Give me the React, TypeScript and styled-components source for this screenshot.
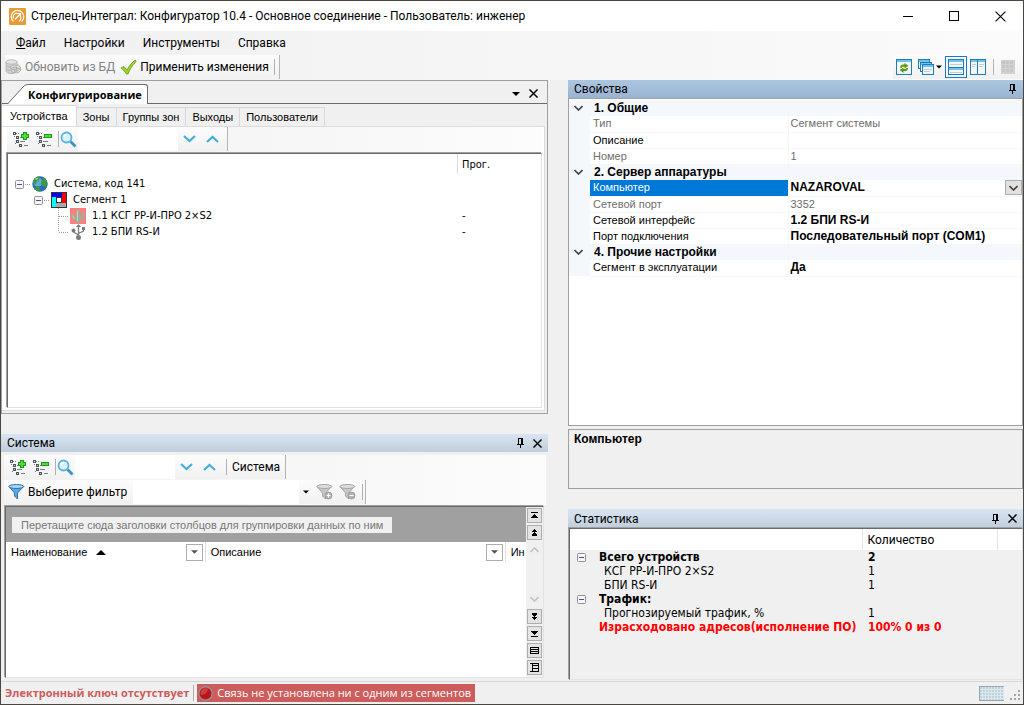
import React from "react";
import styled, { createGlobalStyle, css } from "styled-components";

const UI = `Roboto, "Open Sans", sans-serif`;
const UI_SMALL = `"Open Sans", "Noto Sans", sans-serif`;
const TAHOMA = `"DejaVu Sans Condensed", "DejaVu Sans", sans-serif`;
const SANS = `"Liberation Sans", Arial, sans-serif`;

const Global = createGlobalStyle`
  *, *::before, *::after { box-sizing: border-box; }
  body { margin: 0; background: #3a342e; }
  button, input, select { font: inherit; color: inherit; margin: 0; padding: 0; border: 0; background: none; border-radius: 0; }
  input, select { outline: none; appearance: none; min-width: 0; }
  svg { display: block; flex: none; }
  table { border-collapse: collapse; border-spacing: 0; }
`;

/* ---------- window ---------- */

const Window = styled.div`
  min-height: 100vh;
  display: flex;
  flex-direction: column;
  border: 1px solid #4a453f;
  background: #f0f0f0;
  color: #000;
  font: 12px/16px ${UI};
  white-space: nowrap;
`;

const TitleBar = styled.header`
  display: flex;
  align-items: center;
  height: 30px;
  padding-left: 8px;
  gap: 5px;
  background: #fff;
`;

const Title = styled.h1`
  flex: 1;
  min-width: 0;
  margin: 0;
  overflow: hidden;
  font: inherit;
`;

const WindowButton = styled.button`
  display: flex;
  align-items: center;
  justify-content: center;
  width: 46px;
  height: 30px;
  margin-left: -5px;
  &:first-of-type { margin-left: 0; }
`;

const MenuBar = styled.nav`
  display: flex;
  align-items: center;
  height: 24px;
  padding-left: 6px;
  background: linear-gradient(90deg, #f0f0f0, #fbfbfb);
`;

const MenuItem = styled.button`
  height: 24px;
  padding: 0 9px;
  &:first-child::first-letter { text-decoration: underline; }
`;

const ToolStripRow = styled.div`
  display: flex;
  justify-content: space-between;
  height: 25px;
  padding-left: 4px;
  background: linear-gradient(90deg, #f0f0f0, #fbfbfb);
`;

const ToolStrip = styled.div<{ $end?: boolean }>`
  display: flex;
  align-items: center;
  height: 24px;
  gap: 5px;
  background: linear-gradient(#fcfcfc, #f1f1f1);
  ${(p) => p.$end && css`padding-right: 4px; border-right: 1px solid #b4b4b4;`}
`;

const ToolButton = styled.button<{ $muted?: boolean }>`
  display: flex;
  align-items: center;
  gap: 3px;
  height: 22px;
  color: ${(p) => (p.$muted ? "#838383" : "#000")};
`;

const Rule = styled.span`
  flex: none;
  width: 1px;
  height: 16px;
  background: #b0b0b0;
`;

const LayoutTools = styled(ToolStrip)`
  gap: 0;
  padding-right: 5px;
  ${Rule} { margin: 0 4px; }
`;

const LayoutButton = styled.button<{ $active?: boolean }>`
  display: flex;
  align-items: center;
  gap: 2px;
  height: 22px;
  padding: 0 2px;
  border: 1px solid ${(p) => (p.$active ? "#1a7bd7" : "transparent")};
`;

/* ---------- workspace ---------- */

const Workspace = styled.main`
  flex: 1;
  display: grid;
  grid-template-columns: minmax(0, 547fr) minmax(0, 455fr);
  column-gap: 20px;
`;

const Column = styled.div`
  display: flex;
  flex-direction: column;
  min-width: 0;
`;

const Gap = styled.div<{ $size: number }>`
  flex: none;
  height: ${(p) => p.$size}px;
`;

const ConfigPanel = styled.section`
  flex: 332 1 0;
  display: flex;
  flex-direction: column;
  border: 1px solid #a0a0a0;
`;

const DockBar = styled.div`
  display: flex;
  align-items: flex-end;
  justify-content: space-between;
  height: 23px;
  border-bottom: 1px solid #6b6b6b;
`;

const DockTab = styled.div`
  display: flex;
  margin: 0 0 -1px 6px;
  height: 20px;
`;

const DockCaption = styled.h2`
  margin: 0;
  height: 20px;
  padding: 0 5px 0 0;
  border: solid #6b6b6b;
  border-width: 1px 1px 0 0;
  border-top-right-radius: 3px;
  background: #fff;
  font: bold 11px/19px ${UI_SMALL};
`;

const PanelButtons = styled.div`
  display: flex;
  align-items: center;
  gap: 9px;
  height: 19px;
  padding-right: 9px;
`;

const IconButton = styled.button`
  display: flex;
  align-items: center;
  justify-content: center;
`;

const Tabs = styled.div`
  display: flex;
  align-items: flex-end;
  height: 22px;
  font: 11px/16px ${SANS};
`;

const Tab = styled.button<{ $active?: boolean }>`
  height: ${(p) => (p.$active ? 21 : 19)}px;
  min-width: 40px;
  padding: 0 ${(p) => (p.$active ? 8 : 6)}px;
  border: solid #d9d9d9;
  border-width: 1px 1px 0 0;
  background: ${(p) => (p.$active ? "#fff" : "#f0f0f0")};
`;

const TabPage = styled.div`
  flex: 1;
  display: flex;
  flex-direction: column;
  gap: 1px;
  margin: 0 2px 2px 0;
  padding: 0 2px 2px 5px;
  border: solid #dcdcdc;
  border-width: 1px 1px 1px 0;
  background: #fff;
`;

const Sunken = styled.div`
  flex: 1;
  display: flex;
  flex-direction: column;
  border: 1px solid;
  border-color: #696969 #e3e3e3 #e3e3e3 #696969;
  box-shadow: -1px -1px 0 #a0a0a0;
  background: #fff;
`;

const StripLine = styled.div`
  display: flex;
  height: 25px;
  background: linear-gradient(90deg, #f1f1f1, #fcfcfc);
`;

const TreeTools = styled.div`
  display: flex;
  align-items: center;
  height: 24px;
  padding-left: 5px;
  background: linear-gradient(#fcfcfc, #f1f1f1);
  border-right: 1px solid #b4b4b4;
`;

const TreeToolButton = styled(IconButton)`
  width: 23px;
  height: 22px;
  justify-content: flex-start;
`;

const SearchButton = styled(IconButton)`
  width: 17px;
  height: 22px;
  margin: 0 1px;
`;

const SearchInput = styled.input`
  width: 100px;
  height: 24px;
  background: #fff;
`;

const Nav = styled.div<{ $wide?: boolean }>`
  display: flex;
  align-items: center;
  gap: 10px;
  padding: 0 ${(p) => (p.$wide ? 10 : 8)}px 0 5px;
`;

const TreeHeader = styled.div`
  display: flex;
  justify-content: flex-end;
  height: 20px;
  font: 11px/22px ${TAHOMA};
`;

const ProgColumn = styled.div`
  width: 84px;
  padding-left: 4px;
  border-left: 1px solid #dcdcdc;
`;

const Tree = styled.ul`
  margin: 2px 0 0;
  padding: 0;
  list-style: none;
  font: 11px/16px ${TAHOMA};
`;

const TreeRow = styled.li<{ $level: number }>`
  display: flex;
  align-items: center;
  height: 16px;
  padding-left: ${(p) => 7 + p.$level * 19}px;
`;

const TreeLabel = styled.span`
  flex: 1;
  padding-left: 6px;
`;

const ProgValue = styled.span`
  width: 79px;
`;

/* ---------- docked panels ---------- */

const PanelHeader = styled.div<{ $focused?: boolean; $tall?: boolean }>`
  display: flex;
  align-items: center;
  justify-content: space-between;
  flex: none;
  height: ${(p) => (p.$tall ? 19 : 18)}px;
  padding: 0 6px;
  background: ${(p) => (p.$focused ? "linear-gradient(#adc6e0, #98b4d2)" : "linear-gradient(#d9e5f2, #bfcddc)")};
  h2 { margin: 0; font: inherit; }
  div { display: flex; align-items: center; gap: 8px; }
`;

const SystemPanel = styled.section`
  flex: 244 1 0;
  display: flex;
  flex-direction: column;
`;

const SystemBody = styled.div`
  flex: 1;
  display: flex;
  flex-direction: column;
  margin-right: 2px;
  padding: 3px 0 0 3px;
`;

const GridFrame = styled(Sunken)`
  flex-direction: row;
  margin: 1px 2px 0 1px;
`;

const GridMain = styled.div`
  flex: 1;
  min-width: 0;
`;

const GroupBar = styled.div`
  display: flex;
  align-items: center;
  height: 35px;
  padding-left: 6px;
  background: #a0a0a0;
  font: 11px/16px ${SANS};
  span {
    height: 16px;
    padding: 0 9px;
    background: #f0f0f0;
    color: #777;
  }
`;

const HeaderTable = styled.table`
  table-layout: fixed;
  width: 100%;
  font: 11px/16px ${SANS};
  th {
    height: 20px;
    padding: 0 2px 0 5px;
    border-right: 1px solid #e0e0e0;
    font-weight: normal;
    text-align: left;
  }
  th:last-child { border: 0; padding-right: 0; }
`;

const HeaderCell = styled.div`
  display: flex;
  align-items: center;
  gap: 9px;
  button { margin-left: auto; }
`;

const FilterButton = styled(IconButton)`
  width: 17px;
  height: 17px;
  border: 1px solid #adadad;
`;

const SideBar = styled.div`
  display: flex;
  flex-direction: column;
  gap: 2px;
  width: 17px;
  padding: 1px 1px 2px;
  background: #f0f0f0;
`;

const SideButton = styled(IconButton)`
  width: 15px;
  height: 15px;
  border: 1px solid #adadad;
  background: #e3e3e3;
`;

const Scroller = styled.div`
  flex: 1;
  display: flex;
  flex-direction: column;
  justify-content: space-between;
  align-items: center;
  padding: 5px 0;
`;

const FilterTools = styled.div`
  display: flex;
  align-items: center;
  height: 24px;
  padding: 0 2px 0 4px;
  border-right: 1px solid #b4b4b4;
  background: linear-gradient(#fcfcfc, #f1f1f1);
`;

const FilterSelect = styled.select`
  width: 166px;
  height: 24px;
  margin-left: 6px;
  background: #fff;
`;

const ComboArrow = styled.span`
  display: flex;
  align-items: center;
  justify-content: center;
  width: 14px;
  height: 22px;
  margin-right: 3px;
`;

/* ---------- properties ---------- */

const Properties = styled.section`
  flex: 346 1 0;
  display: flex;
  flex-direction: column;
`;

const PropertyBox = styled.div`
  flex: 1;
  padding-top: 1px;
  border: 1px solid #a0a0a0;
  background: #fff;
`;

const PropertyTable = styled.table`
  table-layout: fixed;
  width: 100%;
  font: 11px/15px ${SANS};
  td, th { height: 16px; padding: 0; text-align: left; font-weight: normal; overflow: hidden; }
  col:first-child { width: 21px; }
  col:nth-child(2) { width: 198px; }
`;

const CategoryRow = styled.tr`
  background: #f4f7fc;
  && th { padding-left: 4px; font: bold 12px/15px ${SANS}; }
  button { margin: 0 0 0 5px; }
`;

const PropertyRow = styled.tr<{ $muted?: boolean; $selected?: boolean; $bold?: boolean }>`
  color: ${(p) => (p.$muted ? "#6d6d6d" : "#000")};
  td:first-child { background: #f4f7fc; }
  && th {
    padding-left: 3px;
    border: solid #f4f7fc;
    border-width: 0 1px 1px 0;
    ${(p) => p.$selected && css`background: #0078d7; color: #fff;`}
  }
  && td:last-child {
    padding-left: 2px;
    border-bottom: 1px solid #f4f7fc;
    ${(p) => p.$bold && css`font: bold 12px/15px ${SANS};`}
  }
`;

const ValueCell = styled.div`
  display: flex;
  justify-content: space-between;
`;

const DropButton = styled(IconButton)`
  width: 17px;
  height: 15px;
  border: 1px solid #adadad;
  background: #e1e1e1;
`;

const Description = styled.div`
  flex: none;
  height: 60px;
  padding: 2px 5px;
  border: 1px solid #a0a0a0;
  font: bold 12px/15px ${SANS};
`;

/* ---------- statistics ---------- */

const Statistics = styled.section`
  flex: 171 1 0;
  display: flex;
  flex-direction: column;
`;

const StatBox = styled(Sunken)`
  margin-left: 1px;
  background: #f0f0f0;
`;

const StatTable = styled.table`
  table-layout: fixed;
  width: 100%;
  font: 12px/14px ${TAHOMA};
  td, th { height: 14px; padding: 0; text-align: left; font-weight: normal; }
  col:nth-child(1) { width: 24px; }
  col:nth-child(3) { width: 135px; }
  col:nth-child(4) { width: 25px; }
  thead th { height: 21px; background: #fff; border-right: 1px solid #e3e3e3; padding-left: 5px; font-family: ${UI}; }
  thead th:last-child { border-right: 0; }
`;

const StatRow = styled.tr<{ $head?: boolean; $alert?: boolean }>`
  color: ${(p) => (p.$alert ? "#f00" : "#000")};
  && td { font-weight: ${(p) => (p.$head || p.$alert ? "bold" : "normal")}; }
  td:nth-child(1) { padding-left: 7px; }
  td:nth-child(2) { padding-left: ${(p) => (p.$head || p.$alert ? 5 : 10)}px; }
  td:nth-child(3) { padding-left: 6px; }
`;

/* ---------- status bar ---------- */

const StatusBar = styled.footer`
  display: flex;
  align-items: center;
  height: 23px;
  padding: 0 2px 0 4px;
  border-top: 1px solid #d7d7d7;
  font: 11px/16px ${UI_SMALL};
`;

const KeyStatus = styled.strong`
  padding-right: 4px;
  color: #cd5c5c;
`;

const LinkStatus = styled.div`
  display: flex;
  align-items: center;
  gap: 4px;
  height: 18px;
  margin-left: 3px;
  padding: 0 4px 0 1px;
  background: #cd5c5c;
  color: #fff;
`;

const StatusEnd = styled.div`
  display: flex;
  align-items: flex-end;
  gap: 6px;
  margin-left: auto;
`;

/* ---------- icons ---------- */

const AppLogo = () => (
  <svg width="17" height="17" viewBox="0 0 17 17" fill="none" stroke="#fff">
    <rect width="17" height="17" rx="1" fill="#ea9a35" stroke="none" />
    <path d="M4.500 13.500A6.300 6.300 0 1 1 12.500 13.500" strokeWidth="1.200" />
    <path d="M4.500 10.500A4.200 4.200 0 0 1 7.500 5M7.500 5.500h4v4M11.500 5.500l-5.500 6M12 9.500q0 2-2 4" strokeWidth="1.200" />
  </svg>
);

const DbIcon = () => (
  <svg width="17" height="16" viewBox="0 0 17 16">
    <path d="M1 3v9c0 1.500 2 2.500 5 2.500s6-1 6-2.500V3z" fill="#cfcfcf" stroke="#b8b8b8" />
    <ellipse cx="6.500" cy="3" rx="5.500" ry="2.200" fill="#e4e4e4" stroke="#b8b8b8" />
    <path d="M1 6.500c1 2 9 2 11 0M1 10c1 2 9 2 11 0" fill="none" stroke="#b8b8b8" />
    <path d="M5 9c1-3 5-4 7-2l1-1.500L16 9l-4.500.800L12 8.500c-2-1-4 0-5 1zM16 10c-1 3.500-4 5-7 3l-1 1.500L6 11l4-.500-.800 1.500c2 .800 4 0 5-2z" fill="#ddd" stroke="#a5a5a5" strokeWidth=".8" />
  </svg>
);

const CheckIcon = () => (
  <svg width="17" height="16" viewBox="0 0 17 16">
    <path d="M1 9l3-1.500L7 11C9 7 12 3 15.500 1L16 2.500C12.500 6 10 10 8 15H6.500C5 12.500 3 10.500 1 9z" fill="#a4d330" stroke="#659c18" strokeWidth=".9" />
  </svg>
);

const TreeToolIcon = ({ plus }: { plus?: boolean }) => (
  <svg width="17" height="17" viewBox="0 0 17 17" shapeRendering="crispEdges">
    <path d="M4 2.500h4M2.500 5v1M3.500 11.500v1" stroke="#6d7f9a" strokeDasharray="1 1" />
    <path d="M8 6.500h4M8 10.500h5M12 14.500h4" stroke="#6d7f9a" />
    <path d="M1 1h3v3H1zM4 5h3v3H4zM4 9h3v3H4zM7 13h3v3H7z" fill="#4a5568" />
    <path d="M2 2h1v1H2z" fill="#fff" />
    <path d="M5 6h1v1H5zM5 10h1v1H5zM8 14h1v1H8z" fill="#f4d32c" />
    {plus ? (
      <path d="M11.500 1.500h3v2h2v3h-2v2h-3v-2h-2v-3h2z" fill="#5bd63c" stroke="#16a016" />
    ) : (
      <path d="M9.500 3.500h7v3h-7z" fill="#5bd63c" stroke="#16a016" />
    )}
  </svg>
);

const SearchIcon = () => (
  <svg width="17" height="17" viewBox="0 0 17 17">
    <path d="M10.500 10.500l5 5" stroke="#3f93c4" strokeWidth="2.800" />
    <circle cx="6.500" cy="6.500" r="5" fill="#d9f1fb" stroke="#58b4dc" strokeWidth="1.800" />
    <path d="M4 6a3 3 0 0 1 3-2.500" stroke="#fff" fill="none" strokeWidth="1.300" />
  </svg>
);

const BlueChevron = ({ up }: { up?: boolean }) => (
  <svg width="13" height="8" viewBox="0 0 13 8" fill="none" stroke="#43addc" strokeWidth="2.200">
    <path d={up ? "M1 7l5.500-5L12 7" : "M1 1l5.500 5L12 1"} />
  </svg>
);

const DownTriangle = ({ size = 7, color = "#000" }: { size?: number; color?: string }) => (
  <svg width={size} height="4" viewBox="0 0 8 4"><path d="M0 0h8L4 4z" fill={color} /></svg>
);

const CloseIcon = ({ size = 9, weight = 1.6 }: { size?: number; weight?: number }) => (
  <svg width={size} height={size} viewBox="0 0 10 10" stroke="#000" strokeWidth={weight}>
    <path d="M.5.5l9 9M9.500.5l-9 9" />
  </svg>
);

const PinIcon = () => (
  <svg width="9" height="10" viewBox="0 0 9 10" shapeRendering="crispEdges">
    <path d="M2 0h5v6H2zM3 1v5h2V1z" fillRule="evenodd" />
    <path d="M1 6h7v1H1zM4 7h1v3H4z" />
  </svg>
);

const Expander = () => (
  <svg width="9" height="9" viewBox="0 0 9 9">
    <rect x=".5" y=".5" width="8" height="8" rx="1" fill="#f6f6f6" stroke="#919191" />
    <path d="M2 4.500h5" stroke="#3b57a5" />
  </svg>
);

const Dots = () => (
  <svg width="8" height="16" viewBox="0 0 8 16" shapeRendering="crispEdges">
    <path d="M1 8.500H7" stroke="#9a9a9a" strokeDasharray="1 1" />
  </svg>
);

const Branch = ({ last }: { last?: boolean }) => (
  <svg width="17" height="16" viewBox="0 0 17 16" shapeRendering="crispEdges">
    <path d={last ? "M5.500 0v8M6 8.500h10" : "M5.500 0v16M6 8.500h10"} stroke="#9a9a9a" strokeDasharray="1 1" fill="none" />
  </svg>
);

const Globe = () => (
  <svg width="16" height="16" viewBox="0 0 16 16">
    <circle cx="8" cy="8" r="7.700" fill="#2b6cb3" />
    <circle cx="6" cy="6" r="4.500" fill="#5fa9df" />
    <path d="M2 3c2-2 4-3 6-2L7 4 5 5 4 8 1 7zM9 5l3-3c2 1 3 3 3.500 6L13 11l-2-1-2-2zM4 10l3 1 1 2-1 2.500C5 15 3 13 2.500 12z" fill="#3f9a3a" />
    <path d="M3 2.500l3-.500-1 2z" fill="#cfe8b8" />
  </svg>
);

const SegmentIcon = () => (
  <svg width="16" height="16" viewBox="0 0 16 16" shapeRendering="crispEdges">
    <path d="M0 0h16v16H0z" fill="#333" />
    <path d="M1 1h10v4H1z" fill="#00f" />
    <path d="M11 1h4v10h-4z" fill="#f00" />
    <path d="M1 5h4v10H1z" fill="#0ff" />
    <path d="M5 11h10v4H5z" fill="#a8a8a8" />
    <path d="M6 6h4v4H6z" fill="#fff" />
  </svg>
);

const CactusIcon = () => (
  <svg width="16" height="16" viewBox="0 0 16 16">
    <path d="M0 0h16v16H0z" fill="#fd8080" />
    <path d="M8 3v11M3 7.500v1q0 2 2 2h3M13 6v2q0 2-2 2H8" fill="none" stroke="#96b39c" strokeWidth="3" strokeLinecap="round" />
    <path d="M7.500 3v10M3 7.500v1q0 1.500 2 1.500" fill="none" stroke="#bcd6c2" strokeWidth="1" />
  </svg>
);

const UsbIcon = () => (
  <svg width="16" height="16" viewBox="0 0 16 16" fill="none" stroke="#7b7b7b" strokeWidth="1.300">
    <path d="M8.500 2v11M8.500 11L3.500 8V6M8.500 9.500l5-2.500V5" />
    <path d="M8.500 0l2.500 3H6z" fill="#7b7b7b" stroke="none" />
    <circle cx="8.500" cy="13.500" r="2.500" fill="#7b7b7b" stroke="none" />
    <circle cx="3.500" cy="6.500" r="2" fill="#7b7b7b" stroke="none" />
    <path d="M12 3h3v3h-3z" fill="#7b7b7b" stroke="none" />
  </svg>
);

const Pane = ({ x = 0, y = 0, w = 16, h = 16 }: { x?: number; y?: number; w?: number; h?: number }) => (
  <g>
    <rect x={x + 0.5} y={y + 0.5} width={w - 1} height={h - 1} fill="#f4f7fa" stroke="#1d7db4" />
    <path d={`M${x + 1} ${y + 2}h${w - 2}`} stroke="#70c3ea" strokeWidth="2" />
  </g>
);

const RefreshPane = () => (
  <svg width="16" height="16" viewBox="0 0 16 16">
    <Pane />
    <path d="M4 8.500c0-2 1.500-3.500 4.500-3V4L12.500 6.800 8.500 9.500V7.800C7 7.500 6 8 5.500 9zM12 9c0 2.500-1.500 3.500-4.500 3V14L3.500 11 7.500 8.500V10c1.500.300 2.500 0 3-1z" fill="#5d9c12" />
  </svg>
);

const CascadePanes = () => (
  <svg width="16" height="16" viewBox="0 0 16 16">
    <Pane w={12} h={10} /><Pane x={2} y={3} w={12} h={10} /><Pane x={4} y={5} w={12} h={11} />
    <path d="M6 10.500h8M6 12.500h6" stroke="#c5ccd3" />
  </svg>
);

const RowPanes = () => (
  <svg width="16" height="16" viewBox="0 0 16 16">
    <Pane h={9} /><Pane y={8} h={8} />
    <path d="M2 5.500h12M2 13.500h12" stroke="#c5ccd3" />
  </svg>
);

const ColumnPanes = () => (
  <svg width="16" height="16" viewBox="0 0 16 16">
    <Pane w={8} /><Pane x={7} w={9} />
    <path d="M2 5.500h4M2 7.500h3M9 5.500h5M9 7.500h4" stroke="#c5ccd3" />
  </svg>
);

type CellGridProps = { w: number; h: number; step: number; line: string; fill: string; mesh: string };

const CellGrid = ({ w, h, step, line, fill, mesh }: CellGridProps) => {
  const xs = Array.from({ length: Math.ceil(w / step) - 1 }, (_, i) => (i + 1) * step);
  const ys = Array.from({ length: Math.ceil(h / step) - 1 }, (_, i) => (i + 1) * step);
  return (
    <svg width={w} height={h} viewBox={`0 0 ${w} ${h}`} shapeRendering="crispEdges">
      <rect x=".5" y=".5" width={w - 1} height={h - 1} fill={fill} stroke={line} />
      {xs.map((x) => <path key={`x${x}`} d={`M${x}.5 1V${h - 1}`} stroke={mesh} />)}
      {ys.map((y) => <path key={`y${y}`} d={`M1 ${y}.5H${w - 1}`} stroke={mesh} />)}
    </svg>
  );
};

const FunnelIcon = ({ sign }: { sign?: "plus" | "minus" }) => {
  const grey = Boolean(sign);
  return (
    <svg width="17" height="16" viewBox="0 0 17 16">
      <path d="M1 2.500L6.500 9v3l3 3V9L15.500 2.500z" fill={grey ? "#c8c8c8" : "#5aaae0"} stroke={grey ? "#a5a5a5" : "#2a74ad"} />
      <ellipse cx="8.300" cy="2.500" rx="7.500" ry="2" fill={grey ? "#dedede" : "#a8d6f2"} stroke={grey ? "#a5a5a5" : "#2a74ad"} />
      {sign && (
        <g stroke="#fff">
          <circle cx="12.500" cy="11.500" r="3.500" fill="#b0b0b0" stroke="#999" strokeWidth=".8" />
          <path d={sign === "plus" ? "M10.500 11.500h4M12.500 9.500v4" : "M10.500 11.500h4"} strokeWidth="1.200" />
        </g>
      )}
    </svg>
  );
};

const GreyChevron = ({ up, color = "#c3c3c3", width = 9 }: { up?: boolean; color?: string; width?: number }) => (
  <svg width={width} height="6" viewBox="0 0 9 6" fill="none" stroke={color} strokeWidth="1.700">
    <path d={up ? "M.5 5l4-4 4 4" : "M.5 1l4 4 4-4"} />
  </svg>
);

const sidePaths = {
  edge: "M1 1h7v1H1zM4 3h1v1H4zM3 4h3v1H3zM2 5h5v1H2zM1 6h7v1H1z",
  page: "M4 1h1v1H4zM3 2h3v1H3zM2 3h5v1H2zM4 4h1v1H4zM3 5h3v1H3zM2 6h5v1H2zM2 7h5v1H2z",
  list: "M0 1h9v7H0zM1 2v1h7V2zM1 4v1h7V4zM1 6v1h7V6z",
  card: "M0 0h9v9H0V8h2V1H0zM3 1v1h5V1zM3 3v2h5V3zM3 6v2h5V6z",
};

const SideIcon = ({ kind, down }: { kind: keyof typeof sidePaths; down?: boolean }) => (
  <svg width="9" height="9" viewBox="0 0 9 9" shapeRendering="crispEdges">
    <path d={sidePaths[kind]} fillRule="evenodd" transform={down ? "matrix(1 0 0 -1 0 9)" : undefined} />
  </svg>
);

const RedLamp = () => (
  <svg width="15" height="15" viewBox="0 0 15 15">
    <circle cx="7.500" cy="7.500" r="6.700" fill="#b9171c" stroke="#989090" strokeWidth="1.400" />
    <path d="M3 9a5 5 0 0 1 7-6.300C10 6 7 8.500 3 9z" fill="#d03c3c" />
  </svg>
);

const Grip = () => (
  <svg width="11" height="11" viewBox="0 0 11 11" fill="#a5a5a5" shapeRendering="crispEdges">
    <path d="M8 0h2v2H8zM8 4h2v2H8zM4 4h2v2H4zM8 8h2v2H8zM4 8h2v2H4zM0 8h2v2H0z" />
  </svg>
);

/* ---------- data ---------- */

type Prop = { name: string; value?: string; muted?: boolean; selected?: boolean };

const groups: { title: string; items: Prop[] }[] = [
  {
    title: "1. Общие",
    items: [
      { name: "Тип", value: "Сегмент системы", muted: true },
      { name: "Описание" },
      { name: "Номер", value: "1", muted: true },
    ],
  },
  {
    title: "2. Сервер аппаратуры",
    items: [
      { name: "Компьютер", value: "NAZAROVAL", selected: true },
      { name: "Сетевой порт", value: "3352", muted: true },
      { name: "Сетевой интерфейс", value: "1.2 БПИ RS-И" },
      { name: "Порт подключения", value: "Последовательный порт (COM1)" },
    ],
  },
  { title: "4. Прочие настройки", items: [{ name: "Сегмент в эксплуатации", value: "Да" }] },
];

const stats = [
  { name: "Всего устройств", value: "2", head: true },
  { name: "КСГ РР-И-ПРО 2×S2", value: "1" },
  { name: "БПИ RS-И", value: "1" },
  { name: "Трафик:", value: "", head: true },
  { name: "Прогнозируемый трафик, %", value: "1" },
  { name: "Израсходовано адресов(исполнение ПО)", value: "100% 0 из 0", alert: true },
];

const TreeToolbar = ({ label, wide, children }: { label: string; wide?: boolean; children?: React.ReactNode }) => (
  <StripLine>
    <TreeTools>
      <TreeToolButton aria-label="Развернуть"><TreeToolIcon plus /></TreeToolButton>
      <TreeToolButton aria-label="Свернуть"><TreeToolIcon /></TreeToolButton>
      <Rule />
      <SearchButton aria-label="Найти"><SearchIcon /></SearchButton>
      <SearchInput aria-label={label} />
      <Nav $wide={wide}>
        <IconButton aria-label="Далее"><BlueChevron /></IconButton>
        <IconButton aria-label="Назад"><BlueChevron up /></IconButton>
      </Nav>
      {children}
    </TreeTools>
  </StripLine>
);

const SystemName = styled(ToolButton)`
  padding: 0 5px;
`;

export default function App() {
  return (
    <Window>
      <Global />
      <TitleBar>
        <AppLogo />
        <Title>Стрелец-Интеграл: Конфигуратор 10.4 - Основное соединение - Пользователь: инженер</Title>
        <WindowButton aria-label="Свернуть окно"><svg width="10" height="1"><path d="M0 0h10v1H0z" /></svg></WindowButton>
        <WindowButton aria-label="Развернуть окно"><svg width="10" height="10"><rect x=".5" y=".5" width="9" height="9" fill="none" stroke="#000" /></svg></WindowButton>
        <WindowButton aria-label="Закрыть окно"><CloseIcon size={11} weight={1} /></WindowButton>
      </TitleBar>
      <MenuBar>
        <MenuItem>Файл</MenuItem>
        <MenuItem>Настройки</MenuItem>
        <MenuItem>Инструменты</MenuItem>
        <MenuItem>Справка</MenuItem>
      </MenuBar>
      <ToolStripRow>
        <ToolStrip $end>
          <ToolButton $muted><DbIcon />Обновить из БД</ToolButton>
          <ToolButton><CheckIcon />Применить изменения</ToolButton>
          <Rule />
        </ToolStrip>
        <LayoutTools>
          <LayoutButton aria-label="Обновить окна"><RefreshPane /></LayoutButton>
          <LayoutButton aria-label="Каскад"><CascadePanes /><DownTriangle size={6} /></LayoutButton>
          <LayoutButton $active aria-label="По горизонтали"><RowPanes /></LayoutButton>
          <LayoutButton aria-label="По вертикали"><ColumnPanes /></LayoutButton>
          <Rule />
          <LayoutButton aria-label="Сетка"><CellGrid w={14} h={14} step={4} line="#cfcfcf" fill="#c6c6c6" mesh="#d2d2d2" /></LayoutButton>
        </LayoutTools>
      </ToolStripRow>

      <Workspace>
        <Column>
          <ConfigPanel>
            <DockBar>
              <DockTab>
                <svg width="20" height="20" viewBox="0 0 20 20">
                  <path d="M0 20L15 3Q17 .5 20 .5V20z" fill="#fff" />
                  <path d="M0 19.500L15 3Q17 .5 20 .5" fill="none" stroke="#6b6b6b" />
                </svg>
                <DockCaption>Конфигурирование</DockCaption>
              </DockTab>
              <PanelButtons>
                <IconButton aria-label="Меню панели"><DownTriangle size={8} /></IconButton>
                <IconButton aria-label="Закрыть панель"><CloseIcon /></IconButton>
              </PanelButtons>
            </DockBar>
            <Tabs role="tablist">
              <Tab role="tab" $active aria-selected="true">Устройства</Tab>
              <Tab role="tab">Зоны</Tab>
              <Tab role="tab">Группы зон</Tab>
              <Tab role="tab">Выходы</Tab>
              <Tab role="tab">Пользователи</Tab>
            </Tabs>
            <TabPage>
              <TreeToolbar label="Поиск устройства" />
              <Sunken>
                <TreeHeader><ProgColumn>Прог.</ProgColumn></TreeHeader>
                <Tree>
                  <TreeRow $level={0}><Expander /><Dots /><Globe /><TreeLabel>Система, код 141</TreeLabel></TreeRow>
                  <TreeRow $level={1}><Expander /><Dots /><SegmentIcon /><TreeLabel>Сегмент 1</TreeLabel></TreeRow>
                  <TreeRow $level={2}><Branch /><CactusIcon /><TreeLabel>1.1 КСГ РР-И-ПРО 2×S2</TreeLabel><ProgValue>-</ProgValue></TreeRow>
                  <TreeRow $level={2}><Branch last /><UsbIcon /><TreeLabel>1.2 БПИ RS-И</TreeLabel><ProgValue>-</ProgValue></TreeRow>
                </Tree>
              </Sunken>
            </TabPage>
          </ConfigPanel>
          <Gap $size={20} />
          <SystemPanel>
            <PanelHeader>
              <h2>Система</h2>
              <div>
                <IconButton aria-label="Закрепить"><PinIcon /></IconButton>
                <IconButton aria-label="Закрыть"><CloseIcon /></IconButton>
              </div>
            </PanelHeader>
            <SystemBody>
              <TreeToolbar label="Поиск в системе" wide>
                <Rule />
                <SystemName>Система</SystemName>
              </TreeToolbar>
              <StripLine>
                <FilterTools>
                  <ToolButton><FunnelIcon />Выберите фильтр</ToolButton>
                  <FilterSelect aria-label="Фильтр" />
                  <ComboArrow><DownTriangle size={6} /></ComboArrow>
                  <TreeToolButton aria-label="Добавить фильтр"><FunnelIcon sign="plus" /></TreeToolButton>
                  <TreeToolButton aria-label="Удалить фильтр"><FunnelIcon sign="minus" /></TreeToolButton>
                  <Rule />
                </FilterTools>
              </StripLine>
              <GridFrame>
                <GridMain>
                  <GroupBar><span>Перетащите сюда заголовки столбцов для группировки данных по ним</span></GroupBar>
                  <HeaderTable>
                    <colgroup><col style={{ width: "38.3%" }} /><col style={{ width: "57.7%" }} /><col /></colgroup>
                    <thead>
                      <tr>
                        <th><HeaderCell>Наименование<svg width="10" height="5"><path d="M0 5h10L5 0z" /></svg><FilterButton aria-label="Фильтр по наименованию"><DownTriangle color="#555" /></FilterButton></HeaderCell></th>
                        <th><HeaderCell>Описание<FilterButton aria-label="Фильтр по описанию"><DownTriangle color="#555" /></FilterButton></HeaderCell></th>
                        <th>Ин</th>
                      </tr>
                    </thead>
                  </HeaderTable>
                </GridMain>
                <SideBar>
                  <SideButton aria-label="В начало"><SideIcon kind="edge" /></SideButton>
                  <SideButton aria-label="Страница вверх"><SideIcon kind="page" /></SideButton>
                  <Scroller><GreyChevron up /><GreyChevron /></Scroller>
                  <SideButton aria-label="Страница вниз"><SideIcon kind="page" down /></SideButton>
                  <SideButton aria-label="В конец"><SideIcon kind="edge" down /></SideButton>
                  <SideButton aria-label="Список"><SideIcon kind="list" /></SideButton>
                  <SideButton aria-label="Карточка"><SideIcon kind="card" /></SideButton>
                </SideBar>
              </GridFrame>
            </SystemBody>
          </SystemPanel>
          <Gap $size={3} />
        </Column>

        <Column>
          <Properties>
            <PanelHeader $focused>
              <h2>Свойства</h2>
              <div><IconButton aria-label="Закрепить"><PinIcon /></IconButton></div>
            </PanelHeader>
            <PropertyBox>
              <PropertyTable>
                <colgroup><col /><col /><col /></colgroup>
                {groups.map((g) => (
                  <tbody key={g.title}>
                    <CategoryRow>
                      <td><IconButton aria-label={`Свернуть ${g.title}`}><GreyChevron color="#444" /></IconButton></td>
                      <th colSpan={2}>{g.title}</th>
                    </CategoryRow>
                    {g.items.map((p) => (
                      <PropertyRow key={p.name} $muted={p.muted} $selected={p.selected} $bold={!p.muted}>
                        <td />
                        <th scope="row">{p.name}</th>
                        <td>
                          <ValueCell>
                            {p.value}
                            {p.selected && <DropButton aria-label="Выбрать компьютер"><GreyChevron color="#444" /></DropButton>}
                          </ValueCell>
                        </td>
                      </PropertyRow>
                    ))}
                  </tbody>
                ))}
              </PropertyTable>
            </PropertyBox>
          </Properties>
          <Gap $size={3} />
          <Description>Компьютер</Description>
          <Gap $size={20} />
          <Statistics>
            <PanelHeader $tall>
              <h2>Статистика</h2>
              <div>
                <IconButton aria-label="Закрепить"><PinIcon /></IconButton>
                <IconButton aria-label="Закрыть"><CloseIcon /></IconButton>
              </div>
            </PanelHeader>
            <StatBox>
              <StatTable>
                <colgroup><col /><col /><col /><col /></colgroup>
                <thead><tr><th colSpan={2} /><th>Количество</th><th /></tr></thead>
                <tbody>
                  {stats.map((s) => (
                    <StatRow key={s.name} $head={s.head} $alert={s.alert}>
                      <td>{s.head && <Expander />}</td>
                      <td>{s.name}</td>
                      <td colSpan={2}>{s.value}</td>
                    </StatRow>
                  ))}
                </tbody>
              </StatTable>
            </StatBox>
          </Statistics>
          <Gap $size={1} />
        </Column>
      </Workspace>

      <StatusBar>
        <KeyStatus>Электронный ключ отсутствует</KeyStatus>
        <Rule />
        <LinkStatus><RedLamp />Связь не установлена ни с одним из сегментов</LinkStatus>
        <StatusEnd><CellGrid w={25} h={15} step={3} line="#9aa5ad" fill="#bcd3dc" mesh="#dde8ec" /><Grip /></StatusEnd>
      </StatusBar>
    </Window>
  );
}
